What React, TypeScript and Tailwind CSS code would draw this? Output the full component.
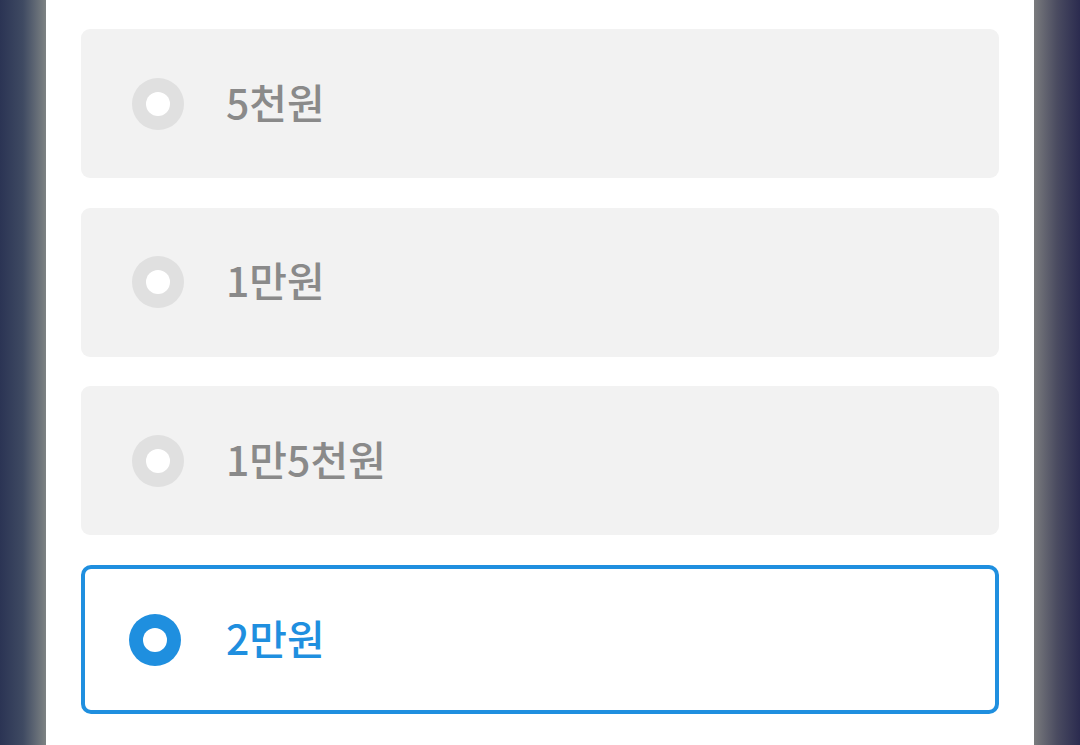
import { useState } from "react";

const options = ["5천원", "1만원", "1만5천원", "2만원"];

export default function App() {
	const [selected, setSelected] = useState(3);

	return (
		<div
			className="flex h-[745px] w-[1080px] overflow-hidden"
			style={{ fontFamily: "'Noto Sans CJK KR', 'Noto Sans', sans-serif" }}
		>
			<div className="w-[46px] shrink-0 bg-gradient-to-r from-[#2b3454] via-[#3f4a62] to-[#7e8383]" />
			<div className="flex flex-1 flex-col gap-[29.7px] bg-white px-[35px] pt-[29px]">
				{options.map((label, i) => {
					const active = i === selected;
					return (
						<button
							key={label}
							onClick={() => setSelected(i)}
							className={
								active
									? "flex h-[149px] shrink-0 items-center rounded-[10px] border-4 border-[#1f8fdf] bg-white pl-[44px] text-left"
									: "flex h-[149px] shrink-0 items-center rounded-[9px] bg-[#f2f2f2] pl-[51px] text-left"
							}
						>
							<span
								className={
									active
										? "flex h-[52px] w-[52px] items-center justify-center rounded-full bg-[#1f8fdf]"
										: "flex h-[52px] w-[52px] items-center justify-center rounded-full bg-[#e0e0e0]"
								}
							>
								<span className="h-[24px] w-[24px] rounded-full bg-white" />
							</span>
							<span
								className={
									active
										? "mb-[5px] ml-[45px] text-[41px] font-medium leading-none text-[#1f8fdf]"
										: "mb-[5px] ml-[42px] text-[41px] font-medium leading-none text-[#8a8a8a]"
								}
							>
								{label}
							</span>
						</button>
					);
				})}
			</div>
			<div className="w-[46px] shrink-0 bg-gradient-to-r from-[#7a7b7d] via-[#4a4b60] to-[#2b2b4f]" />
		</div>
	);
}
